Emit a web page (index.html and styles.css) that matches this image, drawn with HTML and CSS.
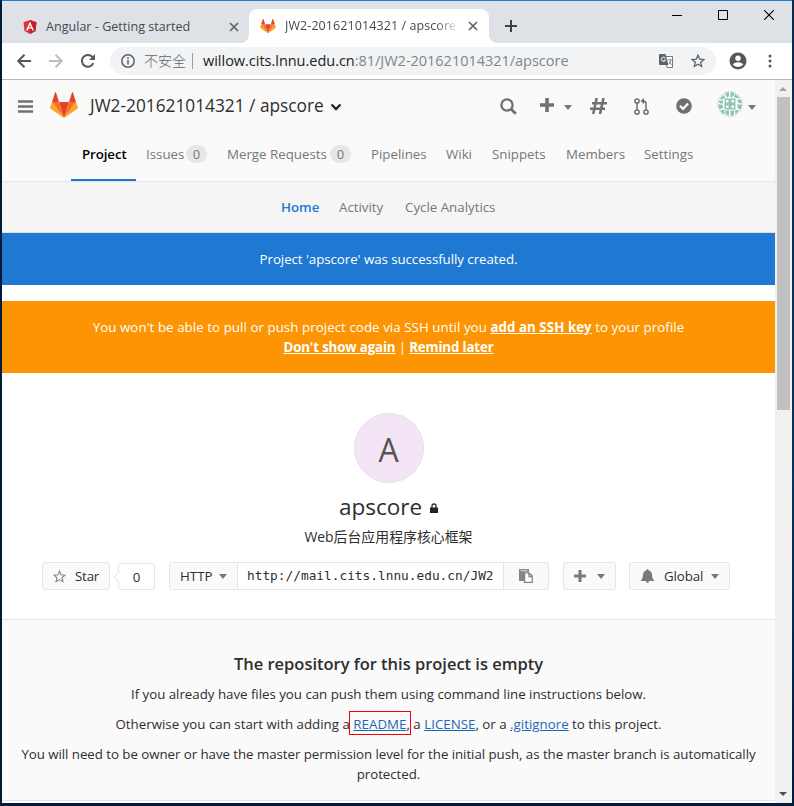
FILE: index.html
```html
<!DOCTYPE html>
<html lang="en">
<head>
<meta charset="utf-8">
<title>JW2-201621014321 / apscore</title>
<link rel="stylesheet" href="styles.css">
</head>
<body>
<svg width="0" height="0" class="defs" aria-hidden="true">
  <symbol id="fox" viewBox="0 0 28 26">
    <path fill="#e24329" d="M14 26 19 10H9z"/>
    <path fill="#fc6d26" d="M14 26 9 10H2zM14 26l5-16h7z"/>
    <path fill="#fca326" d="M2 10 .2 15.200q-.3.9.5 1.500L14 26zM26 10l1.800 5.200q.3.900-.5 1.500L14 26z"/>
    <path fill="#e24329" d="M2 10h7L6 .6q-.4-1.100-.9 0zM26 10h-7L22 .6q.4-1.100.9 0z"/>
  </symbol>
  <symbol id="close" viewBox="0 0 10 10"><path d="m1 1 8 8M9 1 1 9" fill="none" stroke="#5f6368" stroke-width="1.700"/></symbol>
  <symbol id="plus" viewBox="0 0 14 14"><path fill="currentColor" d="M5.200 0h3.600v5.200H14v3.600H8.800V14H5.200V8.800H0V5.200h5.200z"/></symbol>
</svg>
<div class="window">
  <div class="tabs">
    <div class="tab">
      <svg class="favicon" viewBox="0 0 16 16"><path fill="#dd3338" d="M8 1 14.500 3.300l-1 8.700L8 15l-5.500-3L1.500 3.300z"/><path fill="#c3202f" d="M8 1 14.500 3.300l-1 8.700L8 15z"/><path fill="#fff" fill-rule="evenodd" d="M8 2.500 4 11.500h1.600l.8-2h3.200l.8 2H12zm0 3.200 1.100 2.600H6.900z"/></svg>
      <span class="tab-title t-angular">Angular - Getting started</span>
      <svg class="tab-x"><use href="#close"/></svg>
    </div>
    <div class="tab active">
      <svg class="favicon fox-small"><use href="#fox"/></svg>
      <span class="tab-title t-gitlab">JW2-201621014321 / apscore</span>
      <svg class="tab-x"><use href="#close"/></svg>
    </div>
    <svg class="new-tab" viewBox="0 0 12 12"><path d="M6 0v12M0 6h12" stroke="#3c4043" stroke-width="2"/></svg>
    <div class="controls">
      <svg width="10" height="10"><path d="M0 5.500h10" stroke="#000"/></svg>
      <svg width="10" height="10"><path d="M.5.500h9v9h-9z" fill="none" stroke="#000"/></svg>
      <svg width="10" height="10"><path d="m0 0 10 10M10 0 0 10" stroke="#000" stroke-width="1.100"/></svg>
    </div>
  </div>
  <div class="toolbar">
    <svg class="nav-i" viewBox="0 0 14 14"><path d="M14 7H1.500M7.500.700 1.200 7l6.300 6.300" fill="none" stroke="#54585d" stroke-width="2"/></svg>
    <svg class="nav-i" viewBox="0 0 14 14"><path d="M0 7h12.500M6.500.700 12.800 7l-6.300 6.300" fill="none" stroke="#babcbe" stroke-width="2"/></svg>
    <svg class="nav-i" viewBox="0 0 14 14"><path d="M12.300 9.200A5.900 5.900 0 1 1 11.500 3.200" fill="none" stroke="#54585d" stroke-width="2"/><path d="M14 0v6H8z" fill="#54585d"/></svg>
    <div class="omnibox">
      <svg class="info" viewBox="0 0 14 14"><circle cx="7" cy="7" r="6.200" fill="none" stroke="#5f6368" stroke-width="1.500"/><path d="M7 6v4.500M7 3.300v1.600" stroke="#5f6368" stroke-width="1.600"/></svg>
      <span class="unsafe">不安全</span>
      <span class="sep"></span>
      <span class="url"><b>willow.cits.lnnu.edu.cn</b>:81/JW2-201621014321/apscore</span>
      <svg class="translate" viewBox="0 0 14 14"><path fill="#fff" stroke="#777b80" d="M5.500 2.500h8v11H8z"/><path fill="#5f6368" d="M1 0h5.500L9.500 11H1q-1 0-1-1V1q0-1 1-1z"/><path d="M6.300 4.200A2.100 2.100 0 1 0 6.500 6H4.700" fill="none" stroke="#fff"/><path d="M8.800 5.800H13M12 6q-.6 2.600-2 4M10.500 7.500l2 3.500" fill="none" stroke="#777b80" stroke-width=".9"/></svg>
      <svg class="star" viewBox="0 0 14 14"><path fill="none" stroke="#5f6368" stroke-width="1.300" d="m7 1.200 1.700 3.900 4.200.4-3.200 2.800 1 4.200L7 10.300l-3.700 2.200 1-4.200-3.200-2.800 4.200-.4z"/></svg>
    </div>
    <svg class="user" viewBox="0 0 18 18"><circle cx="9" cy="9" r="8.500" fill="#54585d"/><circle cx="9" cy="6.300" r="2.700" fill="#fff"/><path fill="#fff" d="M3.700 12.600q1-2.300 5.300-2.400 4.300.1 5.300 2.400Q12.500 15 9 15.100 5.500 15 3.700 12.600z"/></svg>
    <svg class="dots" viewBox="0 0 4 14"><g fill="#54585d"><circle cx="2" cy="2" r="1.500"/><circle cx="2" cy="7" r="1.500"/><circle cx="2" cy="12" r="1.500"/></g></svg>
  </div>
  <div class="viewport">
    <main>
      <header>
        <div class="bar">
          <svg class="burger" viewBox="0 0 15 13"><path d="M0 1.500h15M0 6.500h15M0 11.500h15" stroke="#707070" stroke-width="2.400"/></svg>
          <svg class="logo"><use href="#fox"/></svg>
          <span class="crumb">JW2-201621014321 / apscore</span>
          <svg class="chev" viewBox="0 0 12 8"><path d="m1.500 1.500 4.500 4.500L10.500 1.500" fill="none" stroke="#222" stroke-width="2.300"/></svg>
          <div class="tools">
            <svg class="search" viewBox="0 0 17 17"><circle cx="7" cy="7" r="5.600" fill="none" stroke="#707070" stroke-width="2.300"/><path d="m11 11 4.800 4.800" stroke="#707070" stroke-width="2.800"/></svg>
            <svg class="plus"><use href="#plus"/></svg><i class="caret"></i>
            <svg class="hash" viewBox="0 0 17 16"><path d="M6.700 0 3.200 16M13.500 0 10 16M2 5.300h15M0 10.700h15" fill="none" stroke="#707070" stroke-width="2.500"/></svg>
            <svg class="merge" viewBox="0 0 15 17"><g fill="none" stroke="#707070" stroke-width="1.500"><circle cx="3" cy="3" r="2.100"/><circle cx="3" cy="14" r="2.100"/><circle cx="12" cy="14" r="2.100"/><path d="M3 5v7M12 12V5.500Q12 3 9 3"/></g><path fill="#707070" d="M10 0v6L6.500 3z"/></svg>
            <svg class="check" viewBox="0 0 16 16"><circle cx="8" cy="8" r="7.800" fill="#707070"/><path d="m4 7.800 3 3 5.200-5.300" fill="none" stroke="#fafafa" stroke-width="2.300"/></svg>
            <svg class="avatar" viewBox="0 0 26 26"><circle cx="13" cy="13" r="12.500" fill="#fff" stroke="#ddd"/><g fill="#8fc4b4"><path d="M7.500 7.500h11v11h-11z"/><path d="m8 2 4-1v4l-2 2zM13.500 1l4 1-1 3-3 2zM18 2.500l5 4.500-4 0-2-1zM2.500 8l4.500-4.500 1 3-2 2zM1 9.500l5 0 0 3-3 0zM1 13.500l4 0 1.500 3-4 2zM3 19.500l4-1 1 4-2 .5zM8 19.500l4 0 0 5-3-1zM13.500 19.500l4 0-1 5-3 .3zM18 19l4.500 0-4 4.500zM20 8.500l4 0 .8 3.500-3 .5zM20 13.500l5 0-1 5-3-1z"/></g><path fill="#fff" d="M9 9h2.500v2.500H9zM14.500 9H17v2.500h-2.500zM9 14.500h2.500V17H9zM14.500 14.500H17V17h-2.500z"/></svg><i class="caret"></i>
          </div>
        </div>
        <nav class="main-nav">
          <a class="w1 on">Project</a><a class="w2">Issues<em>0</em></a><a class="w3">Merge Requests<em>0</em></a><a class="w4">Pipelines</a><a class="w5">Wiki</a><a class="w6">Snippets</a><a class="w7">Members</a><a class="w8">Settings</a>
        </nav>
      </header>
      <nav class="sub-nav"><a class="home">Home</a><a class="activity">Activity</a><a class="cycle">Cycle Analytics</a></nav>
      <div class="flash">Project 'apscore' was successfully created.</div>
      <div class="warn"><span class="ssh">You won't be able to pull or push project code via SSH until you <u>add an SSH key</u> to your profile</span><br><span class="later"><u>Don't show again</u> | <u>Remind later</u></span></div>
      <section class="project">
        <div class="ident">A</div>
        <h1><span>apscore</span><svg viewBox="0 0 8 10"><path d="M2 5V3q0-2 2-2t2 2v2" fill="none" stroke="#2b2b2b" stroke-width="1.300"/><path fill="#222" d="M0 4.500h8V10H0z"/></svg></h1>
        <p class="desc">Web后台应用程序核心框架</p>
        <div class="actions">
          <div class="btn b-star"><svg class="star-o" viewBox="0 0 14 14"><path fill="none" stroke="#858585" stroke-width="1.200" d="m7 1.200 1.700 3.900 4.200.4-3.200 2.800 1 4.200L7 10.300l-3.700 2.200 1-4.200-3.200-2.800 4.200-.4z"/></svg><span>Star</span></div>
          <div class="count">0</div>
          <div class="clone"><div class="http"><span>HTTP</span><i class="caret"></i></div><div class="repo">http://mail.cits.lnnu.edu.cn/JW2</div><div class="copy"><svg viewBox="0 0 14 14"><path fill="#858585" d="M0 0h10v3H5v9H0z"/><path d="M1.500 1.700h7" stroke="#ddd"/><path d="M5.600 3.800h4.500l3.200 3.300v6.200H5.600zM10 4v3.500h3" fill="#fff" stroke="#858585" stroke-width="1.300"/></svg></div></div>
          <div class="btn b-add"><svg class="p12" viewBox="0 0 14 14"><use href="#plus"/></svg><i class="caret"></i></div>
          <div class="btn b-global"><svg class="bell" viewBox="0 0 13 14"><path fill="#7a7a7a" d="M6.500 0q1 0 1 1.200Q11 2.200 11 6q0 3.500 2 5.500v.5H8q-.2 2-1.500 2T5 12H0v-.5Q2 9.500 2 6q0-3.800 3.500-4.800Q5.500 0 6.500 0z"/></svg><span>Global</span><i class="caret"></i></div>
        </div>
      </section>
      <section class="empty">
        <h2>The repository for this project is empty</h2>
        <p class="l1">If you already have files you can push them using command line instructions below.</p>
        <p class="l2">Otherwise you can start with adding a <span class="mark"><a>README</a>,</span> a <a>LICENSE</a>, or a <a>.gitignore</a> to this project.</p>
        <p class="l3">You will need to be owner or have the master permission level for the initial push, as the master branch is automatically<br>protected.</p>
      </section>
    </main>
    <div class="scroll"><i class="up"></i><div class="thumb"></div><i class="down"></i></div>
  </div>
</div>
</body>
</html>
```
FILE: styles.css
```css
* { box-sizing: border-box; }
body { margin: 0; width: 794px; height: 806px; overflow: hidden; background: linear-gradient(#0b2a4c, #06325f 60%, #001c3d); font: 13.3px/20px "Open Sans", "Noto Sans", "Noto Sans CJK SC", sans-serif; color: #2e2e2e; border-left: 2px solid #001b3a; }
.defs { position: absolute; }
svg { display: block; flex: none; }
.window { width: 790px; height: 803px; border-top: 1px solid #1a80d3; background: #fff; white-space: nowrap; }
.tabs { height: 42px; background: #dee1e6; display: flex; position: relative; color: #45494e; font-size: 12.500px; }
.tab { width: 247px; height: 35px; margin-top: 8px; padding: 0 10px 0 20px; display: flex; align-items: center; }
.tab.active { width: 240px; height: 34px; background: #fff; border-radius: 8px 8px 0 0; padding: 0 11px 0 11px; position: relative; }
.tab.active::before, .tab.active::after { content: ""; position: absolute; bottom: 0; width: 8px; height: 8px; }
.tab.active::before { left: -8px; background: radial-gradient(circle at 0 0, transparent 7.500px, #fff 8px); }
.tab.active::after { right: -8px; background: radial-gradient(circle at 100% 0, transparent 7.500px, #fff 8px); }
.favicon { width: 16px; height: 16px; margin-right: 8px; }
.fox-small { margin-right: 9px; }
.tab-title { flex: 1; overflow: hidden; }
.t-angular { letter-spacing: .04px; }
.t-gitlab { max-width: 171px; letter-spacing: .08px; -webkit-mask-image: linear-gradient(90deg, #000 88%, transparent 102%); }
.tab-x { width: 10px; height: 10px; margin-left: auto; }
.new-tab { width: 12px; height: 12px; margin: 19px 0 0 16px; }
.controls { margin: 9px 18px 0 auto; display: flex; gap: 36px; }
.toolbar { height: 37px; border-bottom: 1px solid #b7b8ba; display: flex; align-items: center; padding: 0 17px 0 15px; }
.nav-i { width: 14px; height: 14px; margin-right: 18px; }
.nav-i:nth-child(3) { margin-right: 15px; }
.omnibox { width: 606px; height: 28px; border-radius: 14px; background: #f1f3f4; display: flex; align-items: center; padding: 0 11px; font-size: 14.500px; color: #80868b; }
.info { width: 14px; height: 14px; margin-right: 9px; }
.unsafe { width: 42px; font: 14px/20px "Noto Sans CJK SC", sans-serif; font-weight: 300; color: #5f6368; margin-top: -2px; }
.sep { width: 1px; height: 16px; background: #9b9ea2; margin: 0 9px 0 6px; }
.url { flex: 1; padding-left: 1px; letter-spacing: -.02px; }
.url b { font-weight: 400; color: #202124; }
.translate { width: 14px; height: 14px; margin-right: 18px; }
.star { width: 14px; height: 14px; }
.user { width: 18px; height: 18px; margin-left: 13px; }
.dots { width: 4px; height: 14px; margin-left: auto; margin-right: 3px; }
.viewport { height: 723px; display: flex; }
main { width: 773px; height: 723px; }
header { height: 102px; background: #fafafa; border-bottom: 1px solid #e5e5e5; }
.bar { height: 50px; display: flex; align-items: center; padding: 2px 19px 0 16px; }
.burger { width: 15px; height: 13px; margin-right: 17px; }
.logo { width: 28px; height: 26px; margin: -3px 12px 0 0; }
.crumb { font-size: 17.300px; width: 235px; margin-top: -1px; }
.chev { width: 12px; height: 8px; margin: 1px 0 0 5px; }
.tools { margin-left: auto; display: flex; align-items: center; color: #707070; }
.caret { width: 0; height: 0; border: 4px solid transparent; border-top: 5px solid #777; border-bottom: 0; flex: none; }
.tools .caret { margin-top: 2px; }
.search { width: 17px; height: 17px; margin-right: 23px; }
.plus { width: 14px; height: 14px; margin: -2px 10px 0 0; }
.hash { width: 17px; height: 16px; margin: 0 27px 0 18px; }
.merge { width: 15px; height: 17px; margin-right: 27px; }
.check { width: 16px; height: 16px; margin-right: 25px; }
.avatar { width: 26px; height: 26px; margin: -4px 5px 0 0; }
.main-nav { display: flex; padding-left: 69px; height: 51px; }
.main-nav a { height: 51px; padding: 14px 0 0 10px; color: #777; display: flex; }
.main-nav a.on { color: #000; font-weight: 600; border-bottom: 2px solid #1f78d1; padding-left: 11px; letter-spacing: -.1px; }
.main-nav em { font-style: normal; width: 21px; height: 18px; border-radius: 9px; background: #e7e7e7; text-align: center; line-height: 18px; font-size: 13px; margin: 1px 10px 0 auto; }
.w1 { width: 65px; } .w2 { width: 81px; } .w3 { width: 144px; } .w4 { width: 75px; }
.w5 { width: 46px; } .w6 { width: 74px; } .w7 { width: 78px; } .w8 { width: 70px; }
.sub-nav { height: 51px; background: #f5f5f5; border-bottom: 1px solid #e0e0e0; padding: 15px 0 0 279px; display: flex; color: #777; }
.home { width: 58px; color: #1f78d1; font-weight: 600; }
.activity { width: 66px; }
.flash { height: 52px; background: #1f78d1; color: #fff; text-align: center; line-height: 52px; letter-spacing: -.05px; }
.warn { height: 72px; margin-top: 16px; background: #fc9403; color: #fff; text-align: center; padding-top: 16px; }
.warn u { font-weight: 700; }
.ssh { letter-spacing: .06px; }
.later { letter-spacing: -.15px; }
.project { height: 246px; padding-top: 40px; text-align: center; }
.ident { width: 70px; height: 70px; margin: 0 auto; border-radius: 50%; background: #f3e5f5; border: 1px solid #e5e0e8; color: #555; font-size: 32px; line-height: 72px; }
h1 { font-weight: 400; font-size: 22.500px; line-height: 30px; height: 30px; margin: 9px 0 0; display: flex; justify-content: center; align-items: center; }
h1 svg { width: 8px; height: 10px; margin: 2px 0 0 8px; }
.desc { margin: 5px 0 15px; line-height: 20px; font-family: "Open Sans", "Noto Sans CJK SC", sans-serif; font-size: 13.900px; }
.actions { display: flex; padding-left: 40px; color: #2e2e2e; }
.btn, .clone { height: 28px; border: 1px solid #e5e5e5; border-radius: 3px; background: #fafafa; display: flex; align-items: center; }
.b-star { width: 68px; padding-left: 10px; }
.star-o { width: 13px; height: 13px; margin-right: 9px; }
.b-star span { letter-spacing: -.2px; }
.count { width: 37px; height: 27px; border: 1px solid #e5e5e5; border-radius: 3px; margin: 1px 14px 0 8px; line-height: 27px; position: relative; }
.count::before { content: ""; position: absolute; width: 7px; height: 7px; left: -4px; top: 9px; background: #fff; border: 1px solid #e5e5e5; border-width: 0 0 1px 1px; transform: rotate(45deg); }
.clone { width: 380px; overflow: hidden; }
.http { width: 67px; display: flex; align-items: center; padding-left: 10px; }
.http .caret { margin-left: 7px; }
.repo { width: 267px; height: 26px; background: #fff; border: 1px solid #e5e5e5; border-width: 0 1px; font: 12.800px/26px "DejaVu Sans Mono", monospace; text-align: left; padding-left: 9px; }
.copy { flex: 1; display: flex; padding-left: 15px; }
.copy svg { width: 14px; height: 14px; }
.b-add { width: 53px; margin: 0 13px 0 14px; padding-left: 10px; color: #7a7a7a; }
.p12 { width: 12px; height: 12px; margin-right: 11px; }
.b-global { width: 101px; padding-left: 11px; }
.b-global span { letter-spacing: -.1px; }
.bell { width: 13px; height: 14px; margin-right: 10px; }
.b-global .caret { margin-left: 8px; }
.empty { height: 182px; background: #fafafa; border: 1px solid #e5e5e5; border-width: 1px 0; text-align: center; }
.empty h2 { font-size: 16.500px; font-weight: 600; line-height: 24px; margin: 32px 0 8px; letter-spacing: -.02px; }
.empty p { margin: 0 0 10px; }
.empty a { color: #1b69b6; text-decoration: underline; }
.l1 { letter-spacing: -.02px; }
.l3 { letter-spacing: -.05px; }
.l2 { letter-spacing: .01px; }
.mark { display: inline-block; height: 24px; vertical-align: top; border: 1px solid #f00; padding: 0 0 0 3px; margin: -3px -1px -1px -4px; line-height: 24px; }
.scroll { width: 17px; height: 723px; background: #f1f1f1; display: flex; flex-direction: column; align-items: center; padding: 7px 2px 7px 0; }
.up { border: 4px solid transparent; border-top: 0; border-bottom: 4px solid #a3a3a3; }
.thumb { width: 13px; height: 313px; margin: 6px 0 auto 1px; background: #c1c1c1; flex: none; }
.down { border: 4px solid transparent; border-bottom: 0; border-top: 4px solid #505050; }
```
